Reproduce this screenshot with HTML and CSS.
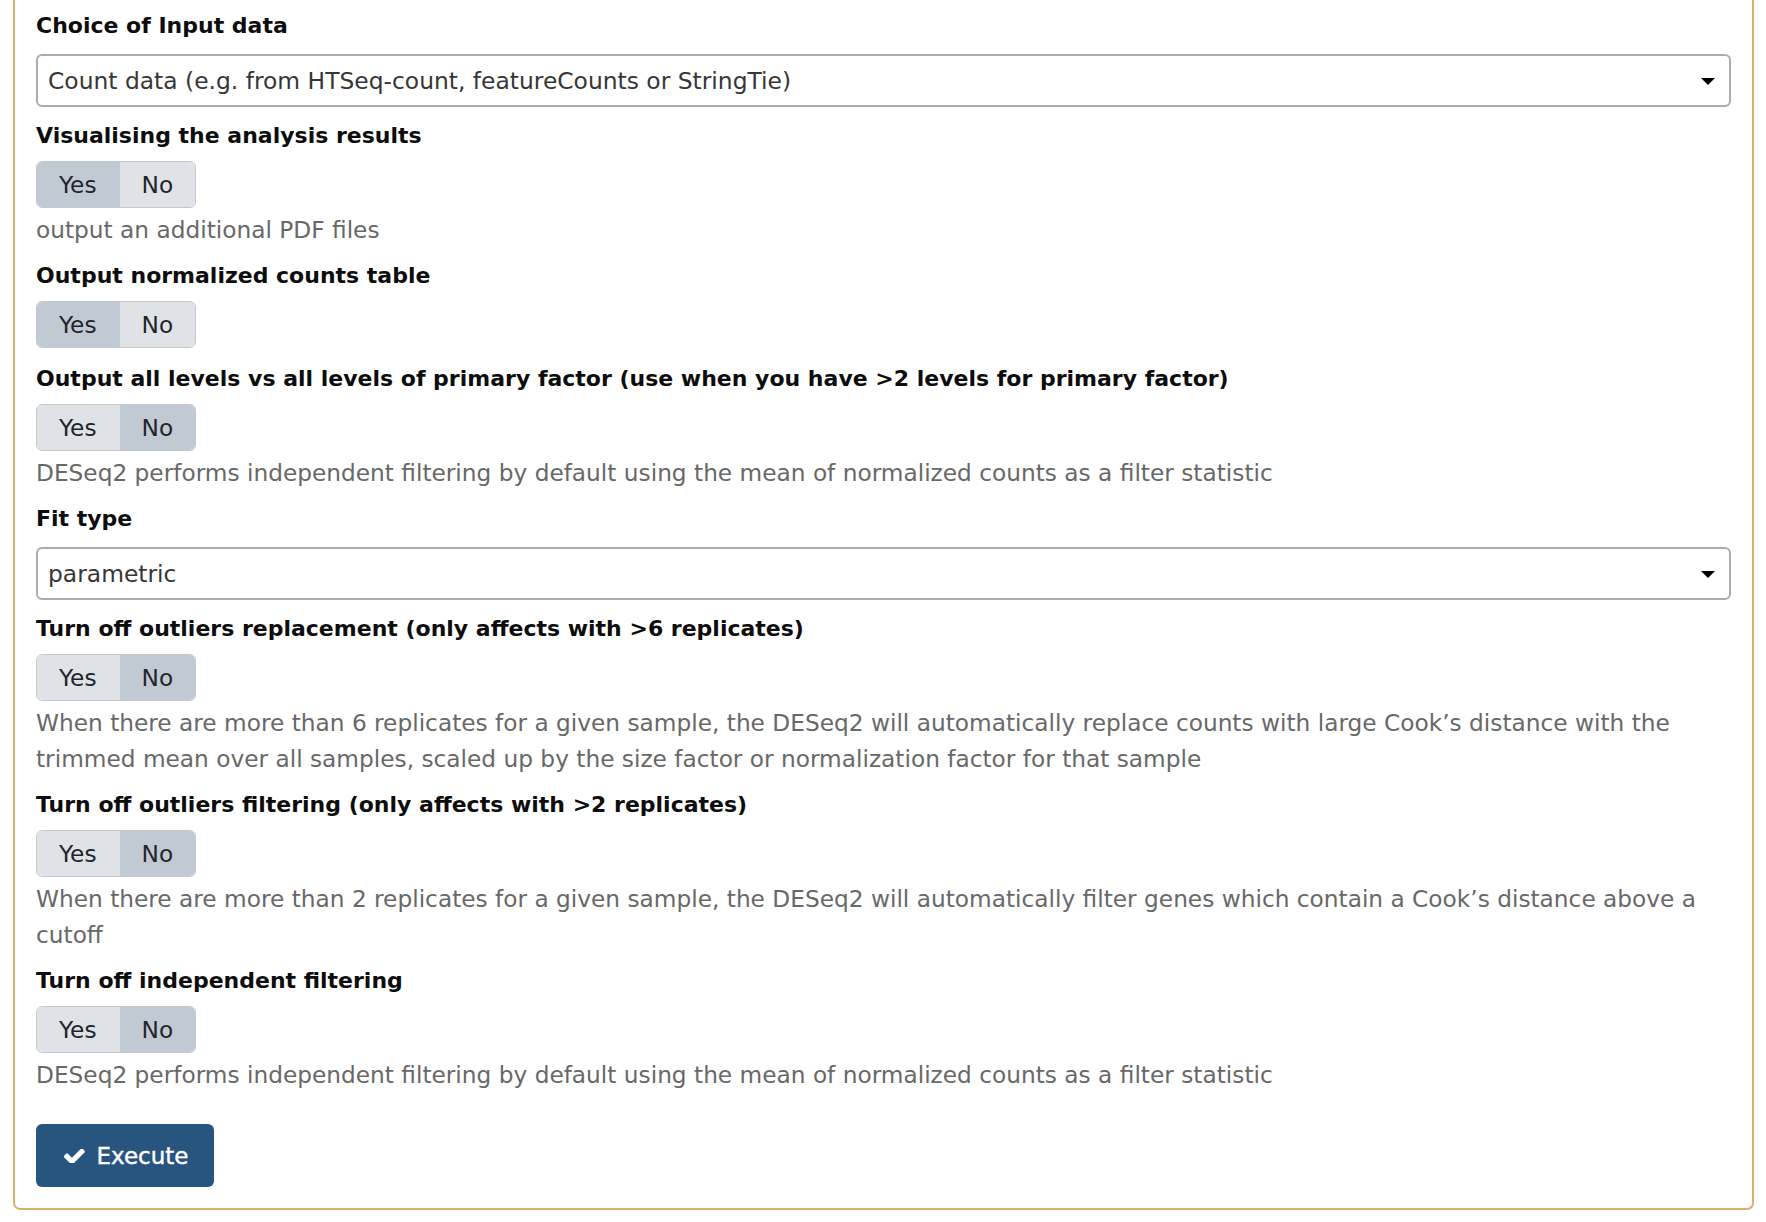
FILE: index.html
```html
<!DOCTYPE html>
<html lang="en">
<head>
<meta charset="utf-8">
<title>DESeq2 form</title>
<link rel="stylesheet" href="styles.css">
</head>
<body>
<div class="panel">
  <div class="field field-select">
    <div class="label">Choice of Input data</div>
    <div class="select">
      <span class="select-text">Count data (e.g. from HTSeq-count, featureCounts or StringTie)</span>
      <span class="caret"></span>
    </div>
  </div>

  <div class="field">
    <div class="label">Visualising the analysis results</div>
    <div class="toggle">
      <span class="opt opt-yes active">Yes</span><span class="opt opt-no">No</span>
    </div>
    <div class="help">output an additional PDF files</div>
  </div>

  <div class="field nohelp">
    <div class="label">Output normalized counts table</div>
    <div class="toggle">
      <span class="opt opt-yes active">Yes</span><span class="opt opt-no">No</span>
    </div>
  </div>

  <div class="field">
    <div class="label">Output all levels vs all levels of primary factor (use when you have &gt;2 levels for primary factor)</div>
    <div class="toggle">
      <span class="opt opt-yes">Yes</span><span class="opt opt-no active">No</span>
    </div>
    <div class="help">DESeq2 performs independent filtering by default using the mean of normalized counts as a filter statistic</div>
  </div>

  <div class="field field-select">
    <div class="label">Fit type</div>
    <div class="select">
      <span class="select-text">parametric</span>
      <span class="caret"></span>
    </div>
  </div>

  <div class="field">
    <div class="label">Turn off outliers replacement (only affects with &gt;6 replicates)</div>
    <div class="toggle">
      <span class="opt opt-yes">Yes</span><span class="opt opt-no active">No</span>
    </div>
    <div class="help">When there are more than 6 replicates for a given sample, the DESeq2 will automatically replace counts with large Cook’s distance with the trimmed mean over all samples, scaled up by the size factor or normalization factor for that sample</div>
  </div>

  <div class="field">
    <div class="label">Turn off outliers filtering (only affects with &gt;2 replicates)</div>
    <div class="toggle">
      <span class="opt opt-yes">Yes</span><span class="opt opt-no active">No</span>
    </div>
    <div class="help">When there are more than 2 replicates for a given sample, the DESeq2 will automatically filter genes which contain a Cook’s distance above a cutoff</div>
  </div>

  <div class="field">
    <div class="label">Turn off independent filtering</div>
    <div class="toggle">
      <span class="opt opt-yes">Yes</span><span class="opt opt-no active">No</span>
    </div>
    <div class="help">DESeq2 performs independent filtering by default using the mean of normalized counts as a filter statistic</div>
  </div>

  <div class="actions">
    <button class="execute" type="button">
      <svg class="check" viewBox="130 390 1550 1000" width="21" height="14" aria-hidden="true">
        <path d="M1671 566q0 40-28 68l-724 724-136 136q-28 28-68 28t-68-28l-136-136-362-362q-28-28-28-68t28-68l136-136q28-28 68-28t68 28l294 295 656-657q28-28 68-28t68 28l136 136q28 28 28 68z" fill="#ffffff"/>
      </svg>
      <span>Execute</span>
    </button>
  </div>
</div>
</body>
</html>
```

FILE: styles.css
```css
html, body {
  margin: 0;
  padding: 0;
  background: #ffffff;
}

body {
  font-family: "DejaVu Sans", "Liberation Sans", sans-serif;
  font-size: 23.25px;
  line-height: 36px;
  color: #222;
}

.panel {
  margin: 0 12px 0 13px;
  border: 2px solid #d5b36d;
  border-top: none;
  border-radius: 0 0 7px 7px;
  padding: 8px 21px 21px 21px;
}

.field {
  margin-bottom: 10px;
}

.field.nohelp {
  margin-bottom: 13px;
}

.field-select {
  margin-bottom: 11px;
}

.label {
  font-weight: bold;
  font-size: 22px;
  line-height: 36px;
  color: #0d0d0d;
  margin-bottom: 7px;
}

.field-select .label {
  margin-bottom: 10px;
}

.select {
  box-sizing: border-box;
  height: 53px;
  border: 2px solid #ababab;
  border-radius: 6px;
  display: flex;
  align-items: center;
  justify-content: space-between;
  padding: 0 14px 0 10px;
  background: #fff;
}

.select-text {
  color: #363636;
  font-size: 23.4px;
}

.caret {
  width: 0;
  height: 0;
  border-left: 7px solid transparent;
  border-right: 7px solid transparent;
  border-top: 7px solid #000;
  margin-top: 1px;
}

.toggle {
  display: inline-flex;
  box-sizing: border-box;
  height: 47px;
  border: 1.5px solid #c3c8ce;
  border-radius: 6px;
  overflow: hidden;
  vertical-align: top;
}

.opt {
  display: flex;
  align-items: center;
  background: #dfe3e8;
  color: #212529;
}

.opt-yes {
  padding: 0 23px 0 22px;
}

.opt-no {
  padding: 0 22px 0 22px;
}

.opt.active {
  background: #c1c9d2;
}

.help {
  margin-top: 4px;
  color: #686868;
  line-height: 36px;
}

.actions {
  margin-top: 31px;
}

.execute {
  box-sizing: border-box;
  height: 63px;
  width: 178px;
  border: none;
  border-radius: 6px;
  background: #28557f;
  color: #ffffff;
  font-family: "DejaVu Sans", "Liberation Sans", sans-serif;
  font-size: 23px;
  display: inline-flex;
  align-items: center;
  justify-content: center;
  gap: 12px;
  padding: 0 0 0 2px;
  -webkit-text-stroke: 0.4px #ffffff;
}

.check {
  display: block;
}
```
